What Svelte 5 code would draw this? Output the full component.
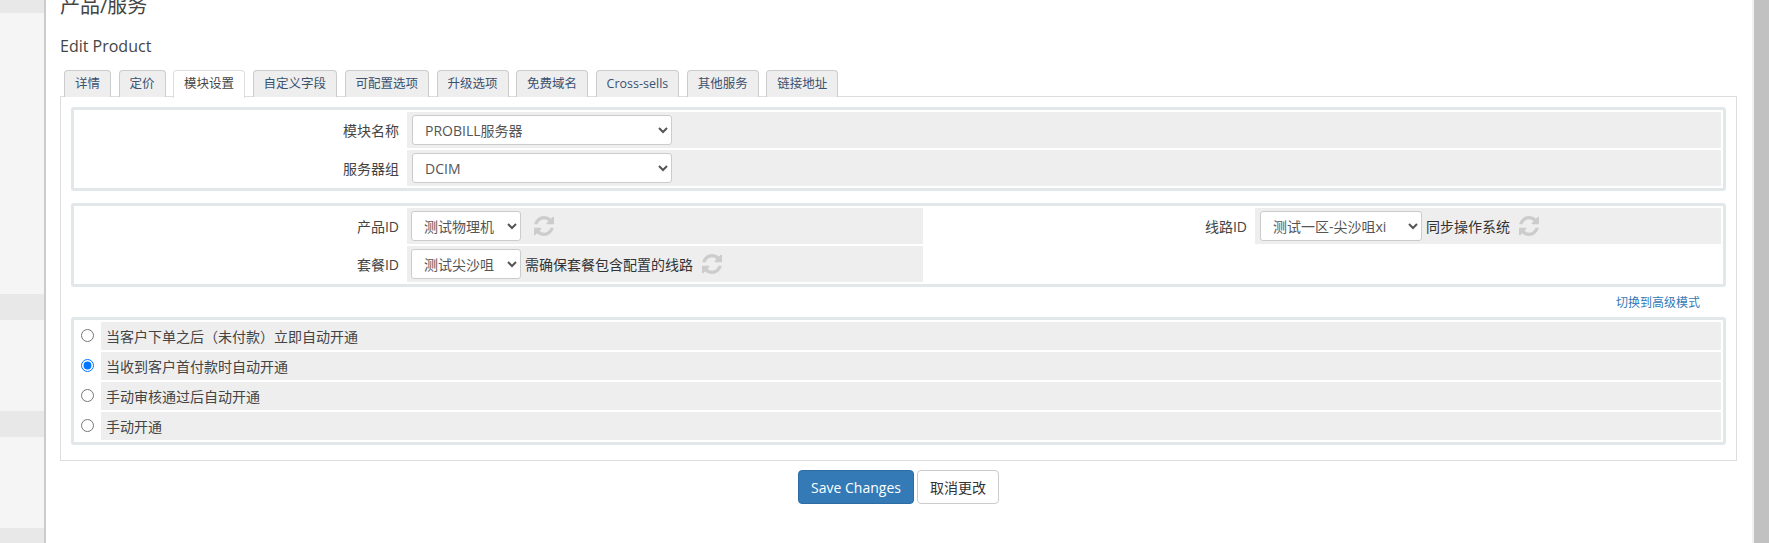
<script>
	const tabs = ['详情', '定价', '模块设置', '自定义字段', '可配置选项', '升级选项', '免费域名', 'Cross-sells', '其他服务', '链接地址'];
	const modes = ['当客户下单之后（未付款）立即自动开通', '当收到客户首付款时自动开通', '手动审核通过后自动开通', '手动开通'];
	let mode = $state(1);
	const refresh = 'M1511 928q0 5-1 7-64 268-268 434.5t-478 166.5q-146 0-282.5-55t-243.5-157l-129 129q-19 19-45 19t-45-19-19-45v-448q0-26 19-45t45-19h448q26 0 45 19t19 45-19 45l-137 137q71 66 161 102t187 36q134 0 250-65t186-179q11-17 53-117 8-23 30-23h192q13 0 22.5 9.5t9.5 22.5zm25-800v448q0 26-19 45t-45 19h-448q-26 0-45-19t-19-45 19-45l138-138q-148-137-349-137-134 0-250 65t-186 179q-11 17-53 117-8 23-30 23h-199q-13 0-22.5-9.5t-9.5-22.5v-7q65-268 270-434.5t480-166.5q146 0 284 55.5t245 156.5l130-129q19-19 45-19t45 19 19 45z';
</script>

{#snippet icon(cls = '')}
	<svg class="refresh {cls}" viewBox="0 0 1536 1536"><path d={refresh} /></svg>
{/snippet}

<div class="page">
	<aside class="sidebar">
		<div class="band first"></div>
		<div class="band second"></div>
		<div class="band third"></div>
		<div class="band fourth"></div>
	</aside>

	<main class="main">
		<h1>产品/服务</h1>
		<h2>Edit Product</h2>

		<ul class="tabs">
			{#each tabs as tab, i}
				<li class:active={i === 2}>{tab}</li>
			{/each}
		</ul>

		<div class="tabbox">
			<div class="box simple">
				<div class="label">模块名称</div>
				<div class="field">
					<select class="wide"><option>PROBILL服务器</option></select>
				</div>
				<div class="label">服务器组</div>
				<div class="field">
					<select class="wide"><option>DCIM</option></select>
				</div>
			</div>

			<div class="box double">
				<div class="label">产品ID</div>
				<div class="field tight">
					<select class="product"><option>测试物理机</option></select>
					{@render icon('far')}
				</div>
				<div class="label">线路ID</div>
				<div class="field tight">
					<select class="line"><option>测试一区-尖沙咀xi</option></select>
					<span>同步操作系统</span>
					{@render icon()}
				</div>
				<div class="label">套餐ID</div>
				<div class="field tight">
					<select class="product"><option>测试尖沙咀</option></select>
					<span>需确保套餐包含配置的线路</span>
					{@render icon()}
				</div>
			</div>

			<div class="switch"><a href="#advanced">切换到高级模式</a></div>

			<div class="box radios">
				{#each modes as text, i}
					<div class="radio"><input type="radio" name="autosetup" value={i} bind:group={mode} /></div>
					<div class="option">{text}</div>
				{/each}
			</div>
		</div>

		<div class="actions">
			<button class="save">Save Changes</button>
			<button class="cancel">取消更改</button>
		</div>
	</main>

	<div class="scrollbar"><div class="thumb"></div></div>
</div>

<style>
	:global(body) {
		margin: 0;
		background: #fff;
		overflow: hidden;
	}
	.page {
		display: flex;
		height: 543px;
		overflow: hidden;
		font-family: "Open Sans", "Noto Sans CJK SC", sans-serif;
		font-size: 14px;
		color: #333;
	}
	.sidebar {
		position: relative;
		flex: none;
		width: 44px;
		background: #f5f5f5;
		border-right: 2px solid #ccc;
	}
	.band {
		position: absolute;
		left: 0;
		right: 0;
		background: #e8e8e8;
	}
	.first { top: 0; height: 13px; }
	.second { top: 294px; height: 26px; }
	.third { top: 411px; height: 26px; }
	.fourth { top: 528px; height: 15px; }
	.main {
		flex: 1;
		min-width: 0;
		padding: 0 15px 0 14px;
	}
	h1 {
		margin: -8px 0 0;
		font-size: 20px;
		font-weight: 400;
		line-height: 28px;
		color: #444;
	}
	h2 {
		margin: 15px 0 0;
		font-size: 16px;
		font-weight: 400;
		line-height: 22px;
		color: #444;
	}
	.tabs {
		display: flex;
		gap: 7.5px;
		margin: 13px 0 0;
		padding: 0 0 0 4px;
		list-style: none;
		height: 26px;
		position: relative;
		z-index: 1;
	}
	.tabs li {
		height: 26px;
		padding: 0 10px;
		line-height: 25px;
		font-size: 12.5px;
		color: #3a5272;
		background: #eee;
		border: 1px solid #ccc;
		border-bottom: 0;
		border-radius: 4px 4px 0 0;
		white-space: nowrap;
	}
	.tabs li.active {
		color: #444;
		background: #fff;
		height: 27px;
		border-color: #ddd;
	}
	.tabbox {
		height: 363px;
		border: 1px solid #ddd;
		padding: 0 10px;
	}
	.box {
		display: grid;
		gap: 2px;
		padding: 2px;
		border: 3px solid #e2e7e9;
		border-radius: 3px;
		background: #fff;
	}
	.simple {
		margin-top: 10px;
		grid-template-columns: 329px 1fr;
		grid-auto-rows: 36px;
	}
	.simple .field {
		padding-left: 5px;
	}
	.double {
		margin-top: 12px;
		grid-template-columns: 329px 516px 328px 1fr;
		grid-auto-rows: 36px;
	}
	.radios {
		grid-template-columns: 23px 1fr;
		grid-auto-rows: 28px;
	}
	.label {
		display: flex;
		align-items: center;
		justify-content: flex-end;
		padding-right: 6px;
		color: #444;
	}
	.field {
		display: flex;
		align-items: center;
		gap: 4px;
		padding-left: 4px;
		background: #eee;
	}
	.field.tight span {
		color: #333;
	}
	select {
		height: 30px;
		padding: 0 8px;
		font: inherit;
		color: #555;
		background: #fff;
		border: 1px solid #ccc;
		border-radius: 3px;
	}
	.wide { width: 260px; }
	.product { width: 110px; }
	.line { width: 162px; margin-left: 1px; }
	.refresh {
		width: 20px;
		height: 20px;
		margin-left: 5px;
		fill: #ccc;
	}
	.refresh.far {
		margin-left: 9px;
	}
	.switch {
		height: 30px;
		display: flex;
		align-items: center;
		justify-content: flex-end;
		padding-right: 26px;
		font-size: 12px;
	}
	.switch a {
		color: #337ab7;
		text-decoration: none;
	}
	.radio {
		display: flex;
		align-items: center;
		justify-content: center;
	}
	.radio input {
		margin: 0 0 2px;
		width: 13px;
		height: 13px;
	}
	.option {
		display: flex;
		align-items: center;
		padding-left: 5px;
		background: #eee;
		color: #444;
	}
	.actions {
		display: flex;
		justify-content: center;
		gap: 3px;
		margin-top: 9px;
	}
	button {
		height: 34px;
		padding: 0 12px;
		font: inherit;
		border-radius: 4px;
	}
	.save {
		color: #fff;
		background: #337ab7;
		border: 1px solid #2e6da4;
	}
	.cancel {
		color: #333;
		background: #fff;
		border: 1px solid #ccc;
	}
	.scrollbar {
		flex: none;
		width: 17px;
		background: #f1f1f1;
		display: flex;
		justify-content: flex-end;
	}
	.thumb {
		width: 15px;
		background: #c1c1c1;
	}
</style>
